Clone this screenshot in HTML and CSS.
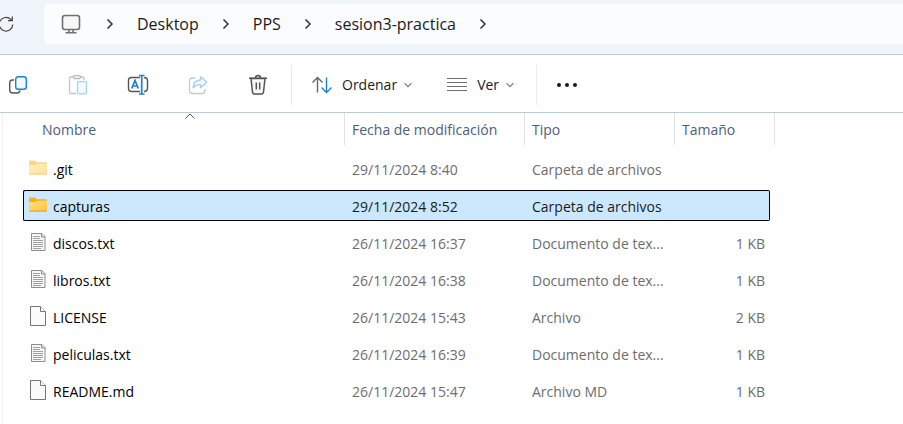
FILE: index.html
```html
<!DOCTYPE html>
<html lang="es">
<head>
<meta charset="utf-8">
<title>sesion3-practica</title>
<link rel="stylesheet" href="styles.css">
</head>
<body>
<svg class="defs" aria-hidden="true">
  <defs>
    <linearGradient id="gold" x1="0" y1="0" x2="1" y2="1"><stop offset="0" stop-color="#ffe08a"/><stop offset="1" stop-color="#fcc433"/></linearGradient>
    <symbol id="chevron" viewBox="0 0 8 12"><path d="M1.500 1.500 6 6l-4.500 4.500" fill="none" stroke="#333" stroke-width="1.500"/></symbol>
    <symbol id="down" viewBox="0 0 8 6"><path d="M.5 1.200 4 4.700l3.500-3.500" fill="none" stroke="#777" stroke-width="1.100"/></symbol>
    <symbol id="folder" viewBox="0 0 18 15">
      <path d="M0 1.200Q0 0 1.200 0H5.600q.6 0 1 .4L8 1.800h9q1 0 1 1V8H0z" fill="#f5b01c"/>
      <path d="M0 4.500h6.500q.6 0 1-.4L8.400 3.200H18V13q0 1-1 1H1q-1 0-1-1z" fill="url(#gold)"/>
      <path d="M0 13h18q0 1.300-1.200 1.300H1.200Q0 14.300 0 13z" fill="#e9a92c"/>
    </symbol>
    <symbol id="text" viewBox="0 0 18 20">
      <path d="M2.500 1.500h10.500l3 3v14h-13.500z" fill="#f8f8f8" stroke="#8c8c8c"/>
      <path d="M12.500 1.500v3.500h3.500" fill="#ddd" stroke="#8c8c8c"/>
      <path d="M4 4.500h7M4 6.500h7M4 8.500h10M4 10.500h10M4 12.500h10M4 14.500h10M4 16.500h8" stroke="#a0a0a0"/>
    </symbol>
    <symbol id="blank" viewBox="0 0 18 20">
      <path d="M1.500.5h10l5 5v14h-15z" fill="#fafafa" stroke="#74777a"/>
      <path d="M11.500.5v5h5" fill="#fff" stroke="#74777a"/>
    </symbol>
  </defs>
</svg>

<header class="nav">
  <button class="refresh" aria-label="Actualizar">
    <svg width="16" height="18" viewBox="0 0 16 18" fill="none" stroke="#444" stroke-width="1.200"><path d="M14.800 9.500A6.800 6.800 0 1 1 12.800 4.400L14 5.600M14.300 1.500V5.700H10"/></svg>
  </button>
  <nav class="address" aria-label="Ruta">
    <svg class="pc" width="20" height="20" viewBox="0 0 20 20" fill="none" stroke="#707070" stroke-width="1.600"><rect x="1.500" y="1.500" width="17" height="14" rx="2.500" fill="#f7f7f7"/><path d="M8 16v2.500M12 16v2.500M4.500 18.700h11"/></svg>
    <svg class="sep"><use href="#chevron"/></svg>
    <a href="#">Desktop</a>
    <svg class="sep"><use href="#chevron"/></svg>
    <a href="#">PPS</a>
    <svg class="sep"><use href="#chevron"/></svg>
    <a href="#">sesion3-practica</a>
    <svg class="sep"><use href="#chevron"/></svg>
  </nav>
</header>

<div class="toolbar" role="toolbar">
  <div class="group">
    <button class="tool" aria-label="Copiar"><svg width="20" height="20" viewBox="0 0 20 20" fill="none" stroke-width="1.400"><path d="M6 5H4.500Q1.700 5 1.700 8v7q0 3 3 3H9q2.500 0 3-2.500" stroke="#555"/><rect x="7.700" y="1.700" width="10.600" height="12.600" rx="2.500" fill="#f5f9fd" stroke="#1a82d6"/></svg></button>
    <button class="tool" aria-label="Pegar" disabled><svg width="20" height="20" viewBox="0 0 20 20" fill="none" stroke-width="1.300"><path d="M8 18.500H3q-1.500 0-1.500-1.500V3.500Q1.500 2 3 2h2.500M12.500 2H14.500Q16 2 16 3.500V5" stroke="#c4c4c4"/><rect x="5.500" y=".7" width="7" height="2.800" rx="1.300" stroke="#b8b8b8"/><rect x="9.500" y="6.600" width="9" height="12.300" rx="1.500" fill="#f5faff" stroke="#a3d0f3"/></svg></button>
    <button class="tool" aria-label="Cambiar nombre"><svg width="22" height="22" viewBox="0 0 22 22" fill="none" stroke-width="1.400"><path d="M13 3.500H4.500q-3 0-3 3v8q0 3 3 3H13M17 3.500q3.500 0 3.500 3.500v7q0 3.500-3.500 3.500" stroke="#555"/><path d="M4.700 14.500 8 6.500l3.300 8M6 12h4M12 1.500h5.500M14.700 1.500v18.500M12 20h5.500" stroke="#1a82d6" stroke-width="1.700"/></svg></button>
    <button class="tool" aria-label="Compartir" disabled><svg width="20" height="20" viewBox="0 0 20 20" fill="none" stroke-width="1.300"><path d="M7 3H4.500q-3 0-3 3v9.500q0 3 3 3H14q3 0 3-3V14" stroke="#c8c8c8"/><path d="M12.500 1.800 18.800 7.300 12.500 12.800V9.700Q8 9.500 5 12.800 5.500 5.500 12.500 5z" fill="#f5faff" stroke="#a3d0f3" stroke-linejoin="round"/></svg></button>
    <button class="tool" aria-label="Eliminar"><svg width="20" height="22" viewBox="0 0 20 22" fill="none" stroke="#555" stroke-width="1.500"><path d="M3 4.500h14L15.500 18q-.2 2-2 2h-7q-1.800 0-2-2z" fill="#f7f7f7"/><path d="M1 4.200h18M7.500 4q0-2.500 2.500-2.500T12.500 4M8.300 8.500v7M11.700 8.500v7"/></svg></button>
  </div>
  <div class="group bordered">
    <button class="menu"><svg width="20" height="18" viewBox="0 0 20 18" fill="none" stroke-width="1.400"><path d="M5.500 16.500V1.500M.5 6.500l5-5 5 5" stroke="#666"/><path d="M14.500 1.500v15M9.500 11.500l5 5 5-5" stroke="#1a82d6"/></svg>Ordenar<svg class="down"><use href="#down"/></svg></button>
    <button class="menu"><svg width="20" height="14" viewBox="0 0 20 14" stroke="#707070"><path d="M0 .5h20M0 4.500h20M0 8.500h20M0 12.500h20"/></svg>Ver<svg class="down"><use href="#down"/></svg></button>
  </div>
  <div class="group bordered">
    <button class="tool" aria-label="Ver más"><svg width="22" height="6" viewBox="0 0 22 6" fill="#1b1b1b"><circle cx="3" cy="3" r="2"/><circle cx="11" cy="3" r="2"/><circle cx="19" cy="3" r="2"/></svg></button>
  </div>
</div>

<main class="files">
  <table>
    <colgroup><col class="c-name"><col class="c-date"><col class="c-type"><col class="c-size"><col class="c-end"></colgroup>
    <thead>
      <tr>
        <th scope="col"><div class="head first">Nombre<svg class="sorted" width="10" height="6" viewBox="0 0 10 6"><path d="M.5 5.500 5 1l4.500 4.500" fill="none" stroke="#555"/></svg></div></th>
        <th scope="col"><div class="head">Fecha de modificación</div></th>
        <th scope="col"><div class="head">Tipo</div></th>
        <th scope="col"><div class="head">Tamaño</div></th>
        <td><div class="head end"></div></td>
      </tr>
    </thead>
    <tbody>
      <tr><td><div class="name faded"><svg class="icon"><use href="#folder"/></svg>.git</div></td><td>29/11/2024 8:40</td><td>Carpeta de archivos</td><td></td></tr>
      <tr class="selected"><td><div class="name"><svg class="icon"><use href="#folder"/></svg>capturas</div></td><td>29/11/2024 8:52</td><td>Carpeta de archivos</td><td></td></tr>
      <tr><td><div class="name"><svg class="icon"><use href="#text"/></svg>discos.txt</div></td><td>26/11/2024 16:37</td><td>Documento de tex...</td><td>1 KB</td></tr>
      <tr><td><div class="name"><svg class="icon"><use href="#text"/></svg>libros.txt</div></td><td>26/11/2024 16:38</td><td>Documento de tex...</td><td>1 KB</td></tr>
      <tr><td><div class="name"><svg class="icon"><use href="#blank"/></svg>LICENSE</div></td><td>26/11/2024 15:43</td><td>Archivo</td><td>2 KB</td></tr>
      <tr><td><div class="name"><svg class="icon"><use href="#text"/></svg>peliculas.txt</div></td><td>26/11/2024 16:39</td><td>Documento de tex...</td><td>1 KB</td></tr>
      <tr><td><div class="name"><svg class="icon"><use href="#blank"/></svg>README.md</div></td><td>26/11/2024 15:47</td><td>Archivo MD</td><td>1 KB</td></tr>
    </tbody>
  </table>
</main>
</body>
</html>
```

FILE: styles.css
```css
* { box-sizing: border-box; }

body {
  margin: 0;
  min-height: 100vh;
  display: flex;
  flex-direction: column;
  background: #fff;
  color: #1b1b1b;
  font: 14px/20px "Open Sans", "Noto Sans", sans-serif;
  overflow-x: hidden;
}

button {
  display: flex;
  align-items: center;
  justify-content: center;
  padding: 0;
  border: 0;
  background: none;
  color: inherit;
  font: inherit;
}

svg { flex: none; }
.defs { position: absolute; width: 0; height: 0; }

.nav {
  display: flex;
  gap: 30px;
  padding: 4px 0 10px;
  background: #eef4f9;
  border-bottom: 1px solid #b9cadb;
}

.refresh { margin-left: -2px; }

.address {
  flex: 1;
  display: flex;
  align-items: center;
  gap: 23px;
  height: 40px;
  padding-left: 17px;
  border-radius: 6px 0 0 6px;
  background: #fbfcfe;
  font-size: 16px;
}
.address a { color: inherit; text-decoration: none; }
.pc { margin-right: 2px; }
.sep { width: 8px; height: 12px; }

.toolbar {
  display: flex;
  align-items: center;
  height: 58px;
  padding-top: 2px;
  border-bottom: 1px solid #b9cadb;
}
.group { display: flex; height: 40px; }
.group:first-child { margin-left: -12px; padding-right: 3px; }
.bordered { border-left: 1px solid #ebebeb; }
.tool { width: 60px; }
.menu { gap: 10px; padding: 0 15px 0 20px; }
.menu + .menu { padding-right: 22px; }
.down { width: 8px; height: 6px; margin-left: -3px; }

.files {
  flex: 1;
  margin-left: 2px;
  padding-left: 20px;
  border-left: 1px solid #f2f2f2;
}

table {
  width: 752px;
  margin-top: -6px;
  table-layout: fixed;
  border-spacing: 0 6px;
}
.c-name { width: 321px; }
.c-date { width: 180px; }
.c-type { width: 150px; }
.c-size { width: 96px; }
.c-end { width: 5px; }

thead th, thead td {
  height: 34px;
  padding: 0;
  vertical-align: top;
  text-align: left;
  font-weight: 400;
  color: #4c607a;
}
.head {
  height: 32px;
  padding-left: 7px;
  border-left: 1px solid #e2e2e2;
  line-height: 33px;
}
.first {
  position: relative;
  margin-left: 12px;
  border-left: 0;
}
.end {
  padding: 0;
  border-left: 0;
  border-right: 1px solid #e2e2e2;
}
.sorted {
  position: absolute;
  top: 0;
  left: 50%;
  margin-left: -5px;
}

tbody td {
  height: 31px;
  padding: 2px 5px 0 8px;
  border: 0 solid #000;
  color: #6d6d6d;
}
tbody td:first-child { padding-left: 6px; color: #000; }
tbody td:nth-child(4) { text-align: right; }

.name { display: flex; align-items: center; gap: 6px; }
.icon { width: 18px; height: 20px; margin-bottom: 4px; }
.faded .icon { opacity: 0.5; }

.selected td {
  border-width: 1px 0;
  background: #cce8ff;
  color: #1b1b1b;
}
.selected td:first-child {
  padding-left: 5px;
  border-left-width: 1px;
  border-radius: 2px 0 0 2px;
}
.selected td:nth-child(4) {
  border-right-width: 1px;
  border-radius: 0 2px 2px 0;
}
```
